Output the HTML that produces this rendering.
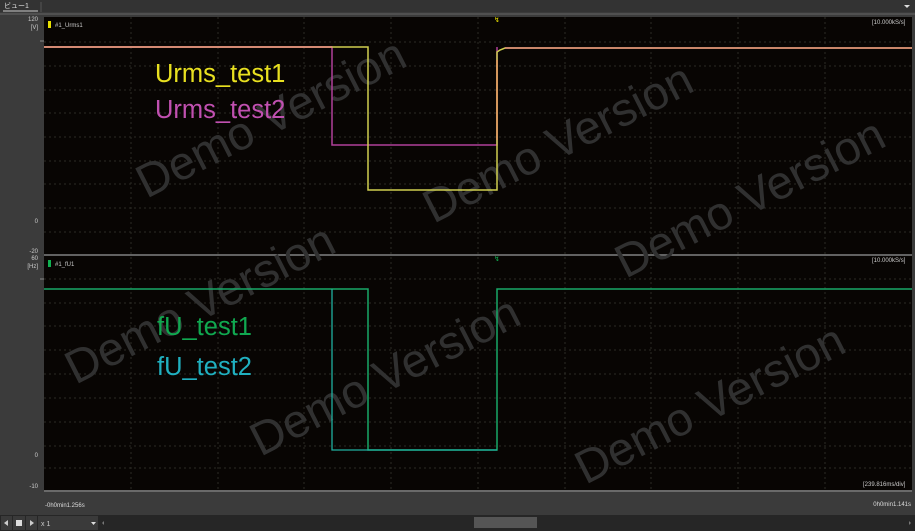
<!DOCTYPE html>
<html><head><meta charset="utf-8"><style>
html,body{margin:0;padding:0;background:#3a3a3a;width:915px;height:531px;overflow:hidden;font-family:"Liberation Sans","Noto Sans CJK JP",sans-serif}
svg{display:block}
</style></head><body>
<svg width="915" height="531" xmlns="http://www.w3.org/2000/svg" font-family="Liberation Sans, Noto Sans CJK JP, sans-serif">
<rect width="915" height="531" fill="#3b3b3b"/>
<rect x="0" y="0" width="915" height="12" fill="#333"/>
<line x1="41" y1="2" x2="41" y2="12" stroke="#555"/>
<text x="4" y="8" font-size="7" fill="#ddd">ビュー1</text>
<line x1="3" y1="11" x2="38" y2="11" stroke="#ccc"/>
<polygon points="904,5 910,5 907,8" fill="#ddd"/>
<line x1="0" y1="14" x2="915" y2="14" stroke="#666"/>
<rect x="44" y="17" width="868" height="237" fill="#080503"/>
<rect x="44" y="256" width="868" height="234" fill="#080503"/>
<line x1="44" y1="255" x2="912" y2="255" stroke="#888"/>
<g stroke="#2c2c26" stroke-dasharray="2,3" stroke-width="1">
<line x1="131" y1="17" x2="131" y2="490"/><line x1="218" y1="17" x2="218" y2="490"/><line x1="304" y1="17" x2="304" y2="490"/><line x1="391" y1="17" x2="391" y2="490"/><line x1="478" y1="17" x2="478" y2="490"/><line x1="565" y1="17" x2="565" y2="490"/><line x1="651" y1="17" x2="651" y2="490"/><line x1="738" y1="17" x2="738" y2="490"/><line x1="825" y1="17" x2="825" y2="490"/>
<line x1="44" y1="42" x2="912" y2="42"/><line x1="44" y1="66" x2="912" y2="66"/><line x1="44" y1="90" x2="912" y2="90"/><line x1="44" y1="113" x2="912" y2="113"/><line x1="44" y1="137" x2="912" y2="137"/><line x1="44" y1="161" x2="912" y2="161"/><line x1="44" y1="184" x2="912" y2="184"/><line x1="44" y1="208" x2="912" y2="208"/><line x1="44" y1="232" x2="912" y2="232"/>
<line x1="44" y1="279" x2="912" y2="279"/><line x1="44" y1="303" x2="912" y2="303"/><line x1="44" y1="326" x2="912" y2="326"/><line x1="44" y1="350" x2="912" y2="350"/><line x1="44" y1="374" x2="912" y2="374"/><line x1="44" y1="398" x2="912" y2="398"/><line x1="44" y1="422" x2="912" y2="422"/><line x1="44" y1="446" x2="912" y2="446"/><line x1="44" y1="468" x2="912" y2="468"/>
</g>
<g fill="#303030" font-size="47" text-anchor="middle">
<text transform="translate(278,132) rotate(-27)">Demo Version</text>
<text transform="translate(565,157) rotate(-27)">Demo Version</text>
<text transform="translate(757,212) rotate(-27)">Demo Version</text>
<text transform="translate(207,318) rotate(-27)">Demo Version</text>
<text transform="translate(392,390) rotate(-27)">Demo Version</text>
<text transform="translate(717,418) rotate(-27)">Demo Version</text>
</g>
<polyline points="44,47 332,47 332,145 497,145 497,47" fill="none" stroke="#b0409a" stroke-width="1.5"/>
<polyline points="44,47 368,47 368,190 497,190 497,52 500,50 505,48 912,48" fill="none" stroke="#cfcf50" stroke-width="1.5"/>
<line x1="44" y1="47" x2="332" y2="47" stroke="#e89080" stroke-width="1.5"/>
<line x1="505" y1="48" x2="912" y2="48" stroke="#e89080" stroke-width="1.5"/>
<line x1="497" y1="60" x2="497" y2="140" stroke="#e8a060" stroke-width="1.5"/>
<polyline points="44,289 368,289 368,450 497,450 497,289 912,289" fill="none" stroke="#18a868" stroke-width="1.5"/>
<polyline points="332,289 332,450 497,450" fill="none" stroke="#20b0a0" stroke-width="1.3"/>
<rect x="48" y="21" width="3" height="7" fill="#e8e000"/>
<text x="55" y="27" font-size="6" fill="#ccc">#1_Urms1</text>
<rect x="48" y="260" width="3" height="7" fill="#10b050"/>
<text x="55" y="266" font-size="6" fill="#ccc">#1_fU1</text>
<text x="872" y="24" font-size="6" fill="#ccc">[10.000kS/s]</text>
<text x="872" y="262" font-size="6" fill="#ccc">[10.000kS/s]</text>
<text x="863" y="486" font-size="6" fill="#ccc">[239.816ms/div]</text>
<text x="494" y="22" font-size="7" fill="#e8e000">↯</text>
<text x="494" y="261" font-size="7" fill="#10b050">↯</text>
<g font-size="25.5">
<text x="155" y="82" fill="#e8e020">Urms_test1</text>
<text x="155" y="118" fill="#c050b0">Urms_test2</text>
<text x="157" y="335" fill="#10a850">fU_test1</text>
<text x="157" y="375" fill="#20b0c0">fU_test2</text>
</g>
<g font-size="6" fill="#ccc" text-anchor="end">
<text x="38" y="21">120</text><text x="38" y="29">[V]</text>
<text x="38" y="223">0</text><text x="38" y="253">-20</text>
<text x="38" y="260">60</text><text x="38" y="268">[Hz]</text>
<text x="38" y="457">0</text><text x="38" y="488">-10</text>
</g>
<line x1="40" y1="41" x2="44" y2="41" stroke="#888"/>
<line x1="40" y1="279" x2="44" y2="279" stroke="#888"/>
<line x1="44" y1="491" x2="912" y2="491" stroke="#999"/>
<text x="45" y="507" font-size="6" fill="#ddd">-0h0min1.256s</text>
<text x="911" y="506" font-size="6" fill="#ddd" text-anchor="end">0h0min1.141s</text>
<rect x="0" y="515" width="915" height="16" fill="#262626"/>
<rect x="1" y="516" width="11" height="14" fill="#3a3a3a"/><polygon points="8,520 8,526 4,523" fill="#ccc"/>
<rect x="13" y="516" width="12" height="14" fill="#3a3a3a"/><rect x="16" y="520" width="6" height="6" fill="#ddd"/>
<rect x="26" y="516" width="11" height="14" fill="#3a3a3a"/><polygon points="30,520 30,526 34,523" fill="#ccc"/>
<rect x="38" y="516" width="60" height="14" fill="#3a3a3a"/>
<text x="41" y="526" font-size="7" fill="#ccc">x 1</text>
<polygon points="91,522 96,522 93.5,525" fill="#ddd"/>
<polygon points="104,521 104,525 102,523" fill="#777"/>
<rect x="474" y="517" width="63" height="11" fill="#555"/>
<polygon points="909,521 909,525 911,523" fill="#777"/>
</svg>
</body></html>
